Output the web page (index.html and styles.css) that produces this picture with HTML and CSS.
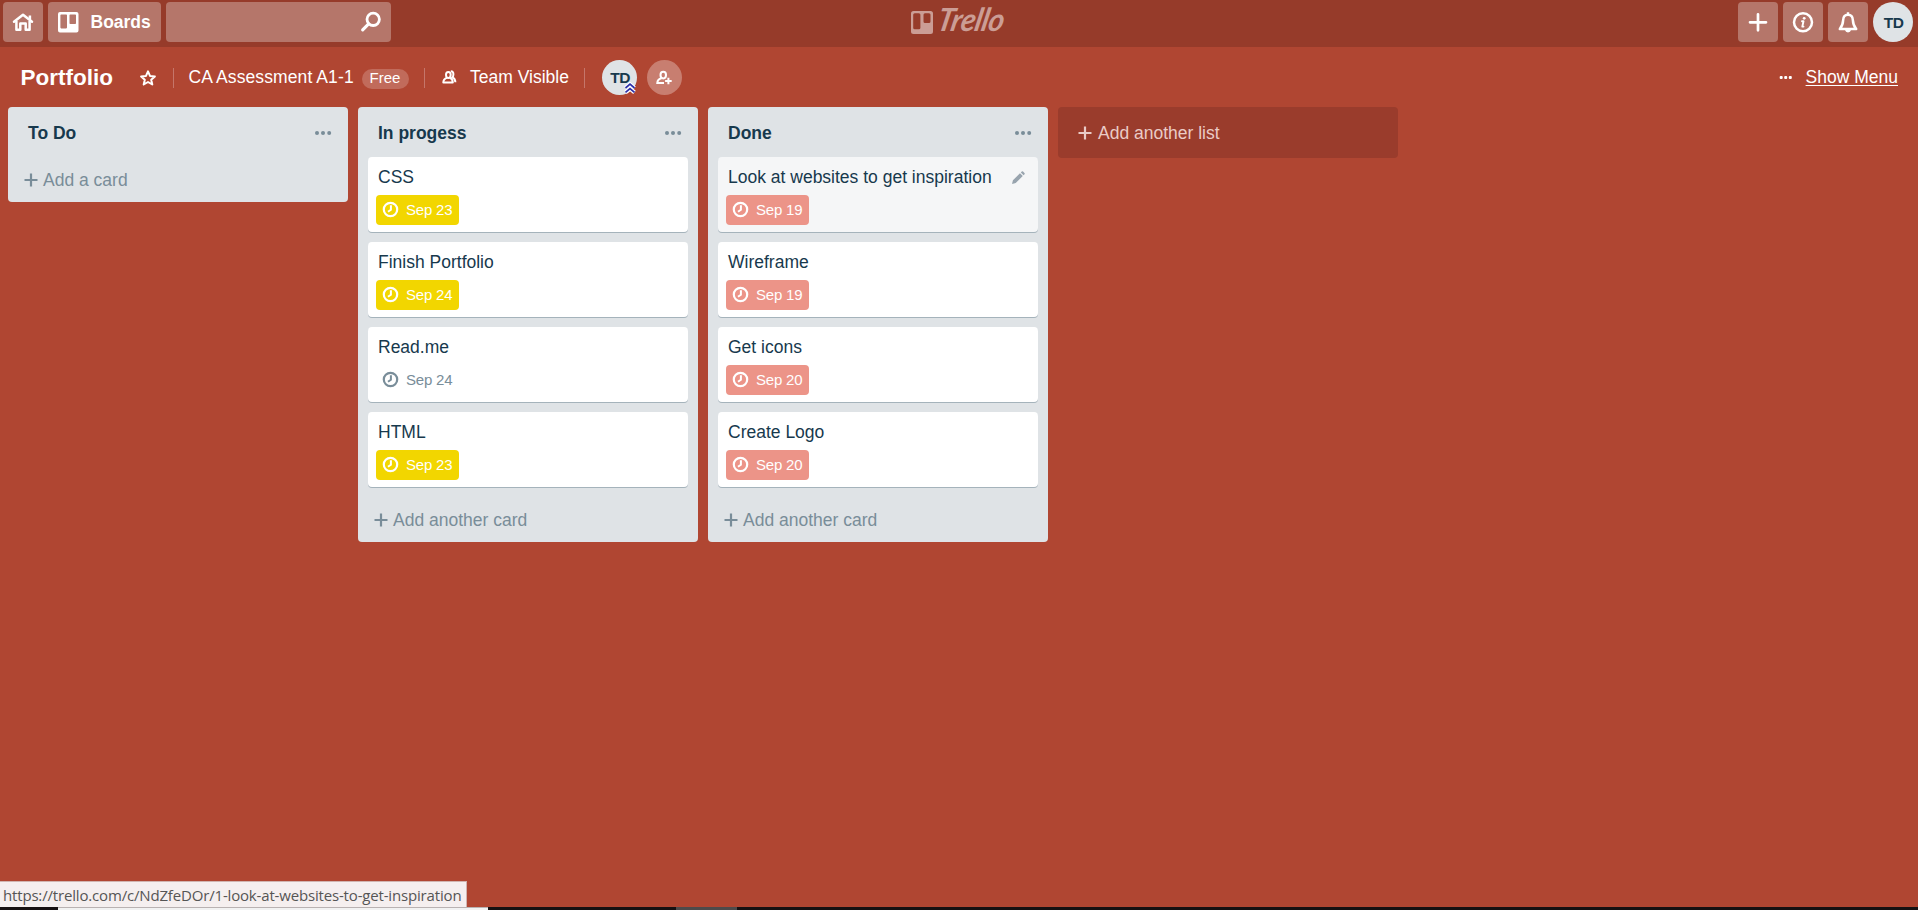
FILE: index.html
```html
<!DOCTYPE html>
<html lang="en">
<head>
<meta charset="utf-8">
<title>Portfolio | Trello</title>
<link rel="stylesheet" href="styles.css">
</head>
<body>
<svg class="sprite" aria-hidden="true">
  <symbol id="clock" viewBox="0 0 17 17"><circle cx="8.5" cy="8.5" r="6.7" fill="none" stroke="currentColor" stroke-width="2.2"/><path d="M8.9 4.2V8.7L6 10.8" fill="none" stroke="currentColor" stroke-width="2"/></symbol>
  <symbol id="dots" viewBox="0 0 18 6"><circle cx="3" cy="3" r="2"/><circle cx="9" cy="3" r="2"/><circle cx="15.2" cy="3" r="2"/></symbol>
  <symbol id="plus" viewBox="0 0 14 14"><path d="M7 .5V13.5M.5 7H13.5" fill="none" stroke="currentColor" stroke-width="2.2"/></symbol>
</svg>
<header class="topbar">
  <div class="top-left">
    <a class="btn"><svg width="40" height="40" viewBox="0 0 40 40"><g fill="none" stroke="#fff" stroke-width="2.5" stroke-linejoin="round"><path d="M11 19.8L20 12.7L29 19.8" stroke-linecap="round"/><path d="M13.4 19V27.8H17.3V21.5H22.7V27.8H26.6V19"/><path d="M26.9 13.5V18"/></g></svg></a>
    <a class="btn boards"><svg width="21" height="21" viewBox="0 0 21 21"><path fill="#fff" fill-rule="evenodd" d="M2 0H18.5A2 2 0 0 1 20.5 2V18.5A2 2 0 0 1 18.5 20.5H2A2 2 0 0 1 0 18.5V2A2 2 0 0 1 2 0ZM3.2 2.5Q2.4 2.5 2.4 3.3V15.6Q2.4 16.4 3.2 16.4H8.2Q9 16.4 9 15.6V3.3Q9 2.5 8.2 2.5ZM12.3 2.5Q11.5 2.5 11.5 3.3V11.2Q11.5 12 12.3 12H17.2Q18 12 18 11.2V3.3Q18 2.5 17.2 2.5Z"/></svg><span>Boards</span></a>
    <div class="search"><svg width="22" height="22" viewBox="0 0 22 22"><g fill="none" stroke="#fff" stroke-width="2.8"><circle cx="13.2" cy="8.3" r="6.2"/><path d="M8.6 12.9L2.7 18.8" stroke-width="3.2" stroke-linecap="round"/></g></svg></div>
  </div>
  <div class="logo"><svg width="22" height="23" viewBox="0 0 22 23"><path fill="currentColor" fill-rule="evenodd" d="M2.5 0H19.5A2.5 2.5 0 0 1 22 2.5V20.5A2.5 2.5 0 0 1 19.5 23H2.5A2.5 2.5 0 0 1 0 20.5V2.5A2.5 2.5 0 0 1 2.5 0ZM3.7 2.3Q2.2 2.3 2.2 3.8V16.8Q2.2 18.3 3.7 18.3H7.9Q9.4 18.3 9.4 16.8V3.8Q9.4 2.3 7.9 2.3ZM14 2.3Q12.5 2.3 12.5 3.8V10.6Q12.5 12.1 14 12.1H18Q19.5 12.1 19.5 10.6V3.8Q19.5 2.3 18 2.3Z"/></svg><span>Trello</span></div>
  <div class="top-right">
    <a class="btn"><svg width="40" height="40" viewBox="0 0 40 40"><path d="M20 12.3V28.3M12 20.3H28" stroke="#fff" stroke-width="2.7" stroke-linecap="round"/></svg></a>
    <a class="btn"><svg width="40" height="40" viewBox="0 0 40 40"><circle cx="20" cy="20.3" r="9" fill="none" stroke="#fff" stroke-width="2.5"/><circle cx="21.2" cy="16.3" r="1.4" fill="#fff"/><path d="M19 19.2H20.5L19.3 24.6H20.5" fill="none" stroke="#fff" stroke-width="1.9" stroke-linecap="round" stroke-linejoin="round"/></svg></a>
    <a class="btn"><svg width="40" height="40" viewBox="0 0 40 40"><path d="M20 12.8C16.8 12.8 15.2 15.2 15.1 18.4C15 22.8 13.6 24.8 11.8 27H28.2C26.4 24.8 25 22.8 24.9 18.4C24.8 15.2 23.2 12.8 20 12.8Z" fill="none" stroke="#fff" stroke-width="2.5" stroke-linejoin="round"/><path d="M17 28H23Q22.5 30.4 20 30.4Q17.5 30.4 17 28ZM18.8 10.2H21.2V13H18.8Z" fill="#fff"/></svg></a>
    <a class="avatar big">TD</a>
  </div>
</header>
<div class="boardbar">
  <h1>Portfolio</h1>
  <svg class="star" width="18" height="18" viewBox="0 0 18 18"><path d="M9 2.3L11 6.9L15.9 7.4L12.2 10.7L13.3 15.5L9 13L4.7 15.5L5.8 10.7L2.1 7.4L7 6.9Z" fill="none" stroke="#fff" stroke-width="2" stroke-linejoin="round"/></svg>
  <i class="rule"></i>
  <span class="org">CA Assessment A1-1</span><span class="free">Free</span>
  <i class="rule after-free"></i>
  <svg class="team" width="15" height="15" viewBox="0 0 15 15"><g fill="none" stroke="#fff" stroke-width="2"><path d="M4 4.8Q4 1.9 6.3 1.9Q8.7 1.9 8.7 4.8Q8.7 8 6.3 8Q4 8 4 4.8Z"/><path d="M5 7.9Q1.3 9 1.3 12.6H10.8Q10.8 9 7.7 7.9" stroke-linejoin="round"/><path d="M8.8 1.3Q11.6 1.4 11.4 4.5Q11.3 6.6 10.4 7.5Q13.2 8.5 13.4 12.3"/></g></svg>
  <span class="visible">Team Visible</span>
  <i class="rule after-team"></i>
  <div class="avatar member">TD<svg class="admin" width="12" height="12" viewBox="0 0 12 12"><path d="M1.5 6L6 2.2L10.5 6M1.5 10.4L6 6.6L10.5 10.4" fill="none" stroke="#fff" stroke-width="4"/><path d="M1.5 6L6 2.2L10.5 6M1.5 10.4L6 6.6L10.5 10.4" fill="none" stroke="#2b2fa8" stroke-width="1.7"/></svg></div>
  <div class="invite"><svg width="17" height="16" viewBox="0 0 17 16"><g fill="none" stroke="#fff" stroke-width="2"><path d="M4.5 5Q4.5 1.8 7.3 1.8Q10 1.8 10 5Q10 8.4 7.3 8.4Q4.5 8.4 4.5 5Z"/><path d="M5.5 8.2Q1.5 9.2 1.3 12.9H8M12.4 7.7V14.3M9.1 11H15.7"/></g></svg></div>
  <a class="menu"><svg width="14" height="5" viewBox="0 0 14 5"><g fill="#fff"><rect x=".7" y="1" width="3" height="3" rx="1"/><rect x="5.2" y="1" width="3" height="3" rx="1"/><rect x="9.8" y="1" width="3" height="3" rx="1"/></g></svg><span>Show Menu</span></a>
</div>
<main class="lists">
  <section class="list">
    <div class="list-head"><h2>To Do</h2><svg class="more"><use href="#dots"/></svg></div>
    <div class="add"><svg class="plus"><use href="#plus"/></svg><span>Add a card</span></div>
  </section>
  <section class="list">
    <div class="list-head"><h2>In progess</h2><svg class="more"><use href="#dots"/></svg></div>
    <div class="cards">
      <article class="card"><p>CSS</p><span class="due soon"><svg><use href="#clock"/></svg>Sep 23</span></article>
      <article class="card"><p>Finish Portfolio</p><span class="due soon"><svg><use href="#clock"/></svg>Sep 24</span></article>
      <article class="card"><p>Read.me</p><span class="due"><svg><use href="#clock"/></svg>Sep 24</span></article>
      <article class="card"><p>HTML</p><span class="due soon"><svg><use href="#clock"/></svg>Sep 23</span></article>
    </div>
    <div class="add"><svg class="plus"><use href="#plus"/></svg><span>Add another card</span></div>
  </section>
  <section class="list">
    <div class="list-head"><h2>Done</h2><svg class="more"><use href="#dots"/></svg></div>
    <div class="cards">
      <article class="card hover"><p>Look at websites to get inspiration</p><span class="due past"><svg><use href="#clock"/></svg>Sep 19</span><svg class="edit" width="13" height="13" viewBox="0 0 14 14"><path d="M0 14L1 10L8.6 2.4L11.6 5.4L4 13ZM9.5 1.5L10.5 .5Q11.2 0 11.9 .6L13.4 2.1Q14 2.8 13.5 3.5L12.5 4.5Z" fill="#98a4ae"/></svg></article>
      <article class="card"><p>Wireframe</p><span class="due past"><svg><use href="#clock"/></svg>Sep 19</span></article>
      <article class="card"><p>Get icons</p><span class="due past"><svg><use href="#clock"/></svg>Sep 20</span></article>
      <article class="card"><p>Create Logo</p><span class="due past"><svg><use href="#clock"/></svg>Sep 20</span></article>
    </div>
    <div class="add"><svg class="plus"><use href="#plus"/></svg><span>Add another card</span></div>
  </section>
  <div class="new-list"><svg class="plus"><use href="#plus"/></svg><span>Add another list</span></div>
</main>
<footer>
  <div class="status">https://trello.com/c/NdZfeDOr/1-look-at-websites-to-get-inspiration</div>
  <div class="taskbar"><i class="field"></i><i class="active"></i></div>
</footer>
</body>
</html>
```
FILE: styles.css
```css
* { box-sizing: border-box; }
body {
  margin: 0;
  height: 910px;
  display: flex;
  flex-direction: column;
  overflow: hidden;
  background: #b04632;
  color: #17394d;
  font: 17.5px/25px "Liberation Sans", Arial, sans-serif;
}
svg { display: block; flex: none; }
h1, h2, p { margin: 0; }
.sprite { width: 0; height: 0; position: absolute; }

.topbar {
  height: 47px;
  flex: none;
  display: grid;
  grid-template-columns: 1fr auto 1fr;
  padding: 2px 5px 5px 3px;
  background: #963b2a;
}
.top-left, .top-right { display: flex; gap: 5px; }
.top-right { justify-content: flex-end; }
.btn, .search {
  height: 40px;
  min-width: 40px;
  border-radius: 4px;
  background: #b5766a;
  color: #fff;
}
.boards {
  width: 113px;
  display: flex;
  align-items: center;
  gap: 11.5px;
  padding-left: 10px;
  font-weight: 700;
}
.search { width: 225px; display: flex; justify-content: flex-end; padding: 9px 9px 0 0; }
.logo {
  display: flex;
  gap: 4px;
  width: 94px;
  padding-top: 9px;
  color: #cb9d95;
}
.logo span {
  font: italic 700 29px/30px Lato, sans-serif;
  letter-spacing: -.4px;
  transform: translate(-1px, -6px) skewX(-12deg) scale(1.03, 1.1);
  transform-origin: 0 80%;
}
.avatar {
  display: flex;
  align-items: center;
  justify-content: center;
  border-radius: 50%;
  background: #dfe3e6;
  color: #17394d;
  font-weight: 700;
}
.big { width: 40px; height: 40px; font-size: 15.5px; padding: 1px 0 0 1px; letter-spacing: -.7px; }

.boardbar {
  height: 60px;
  flex: none;
  display: flex;
  align-items: center;
  padding: 1px 20px 0 20.5px;
  color: #fff;
}
h1 { width: 118px; font-size: 22.5px; line-height: 30px; }
.rule { width: 1px; height: 20px; margin: 0 15px 0 16px; background: #c5766a; }
.org { width: 173px; white-space: nowrap; letter-spacing: .1px; }
.free {
  width: 47px;
  height: 20px;
  border-radius: 10px;
  margin-top: 3px;
  background: #c16b5b;
  text-align: center;
  font-size: 15px;
  line-height: 18px;
}
.after-free { margin: 0 17.5px 0 15px; }
.visible { margin-left: 13px; width: 98px; white-space: nowrap; }
.after-team { margin: 0 17.5px 0 15.5px; }
.member { position: relative; width: 35px; height: 35px; font-size: 15.5px; letter-spacing: -.7px; padding-left: 1px; }
.admin { position: absolute; right: 1px; bottom: 1px; }
.invite {
  width: 35px;
  height: 35px;
  margin-left: 10px;
  border-radius: 50%;
  display: flex;
  align-items: center;
  justify-content: center;
  background: #c87e70;
}
.menu { margin-left: auto; display: flex; align-items: center; gap: 13px; }
.menu span { text-decoration: underline; text-decoration-thickness: 1px; text-underline-offset: 2px; }

.lists { flex: 1; display: flex; align-items: flex-start; gap: 10px; padding-left: 8px; }
.list { width: 340px; border-radius: 4px; background: #dfe3e6; }
.list-head {
  height: 50px;
  display: flex;
  align-items: center;
  justify-content: space-between;
  padding: 1px 16px 0 20px;
}
h2 { padding-top: 2px; font-size: 17.5px; line-height: 25px; }
.more { width: 18px; height: 6px; fill: #798d99; }
.cards { display: flex; flex-direction: column; gap: 10px; padding: 0 10px 10px; }
.card {
  position: relative;
  height: 75px;
  padding: 8px 8px 0;
  border-radius: 4px;
  background: #fff;
  box-shadow: 0 1px 0 #a5b3bb;
}
.card.hover { background: #f5f6f7; }
.card p { padding: 0 2px; margin-bottom: 5px; }
.edit { position: absolute; right: 13px; top: 14px; }
.due {
  display: flex;
  align-items: center;
  width: 83px;
  height: 30px;
  padding: 0 0 1px 6px;
  gap: 7px;
  border-radius: 4px;
  color: #798d99;
  font-size: 15px;
  line-height: 17px;
  letter-spacing: -.2px;
}
.due svg { width: 17px; height: 17px; }
.soon { background: #f2d600; color: #fff; }
.past { background: #ec9488; color: #fff; }
.add {
  height: 45px;
  display: flex;
  align-items: center;
  gap: 5.5px;
  padding-left: 15.5px;
  color: #798d99;
}
.plus { width: 14px; height: 14px; }
.add span, .new-list span { padding-top: 2px; }
.new-list {
  width: 340px;
  height: 51px;
  display: flex;
  align-items: center;
  gap: 6px;
  padding-left: 20px;
  border-radius: 4px;
  background: #9a3c2c;
  color: #eacbc6;
}

.status {
  width: 467px;
  height: 26px;
  padding-left: 3px;
  border: solid #d1b5b1;
  border-width: 1px 1px 0 0;
  background: #f5efef;
  color: #555;
  font: 15px/27px "Open Sans", sans-serif;
  letter-spacing: -.17px;
  white-space: nowrap;
}
.taskbar { height: 3px; display: flex; background: #171112; }
.field { width: 430px; margin-left: 58px; background: #f2f2f2; border-top: 1px solid #b9b2b2; }
.active { width: 61px; margin-left: 188px; background: #4e4a4a; }
```
